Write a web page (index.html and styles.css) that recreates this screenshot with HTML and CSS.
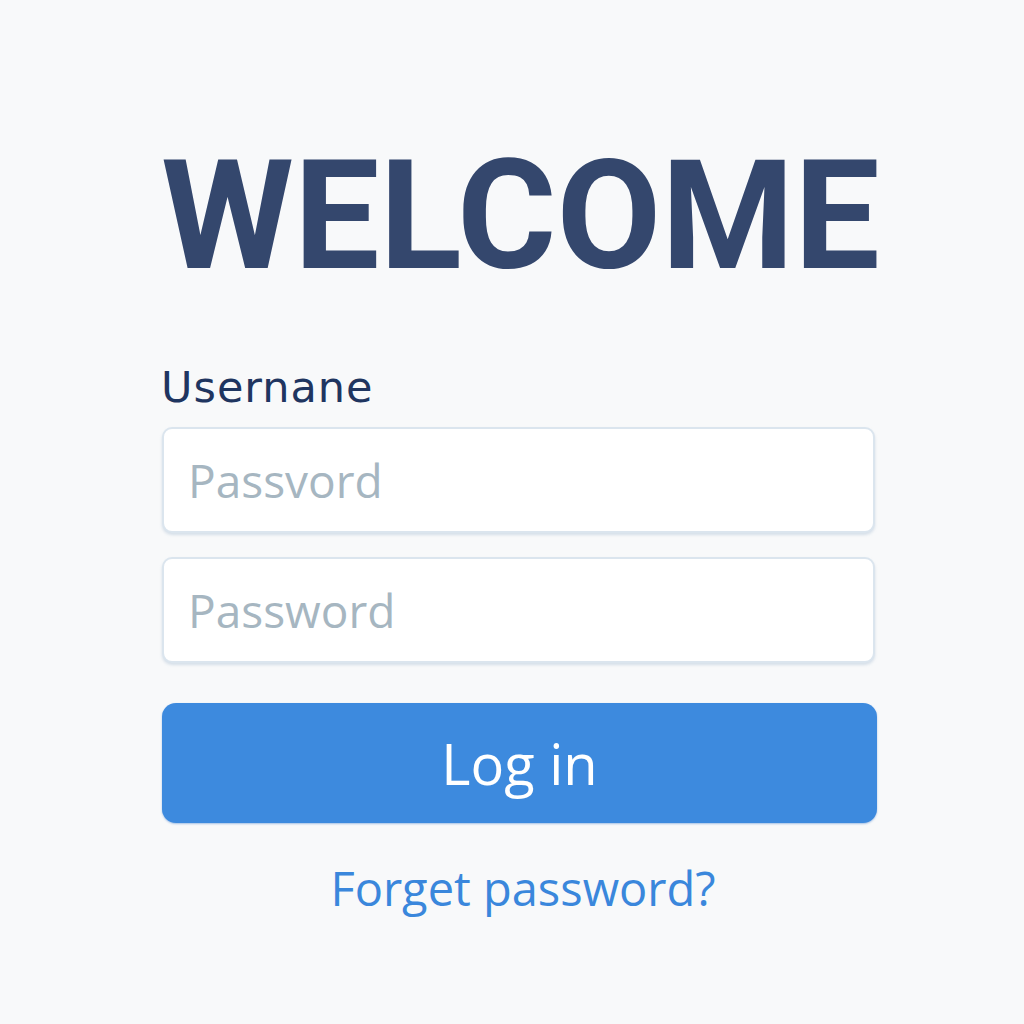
FILE: index.html
```html
<!DOCTYPE html>
<html lang="en">
<head>
<meta charset="utf-8">
<title>Welcome</title>
<link rel="stylesheet" href="styles.css">
</head>
<body>
<main class="page">
  <h1 class="title">WELCOME</h1>
  <form class="form">
    <label class="label" for="user">Usernane</label>
    <input class="field" id="user" type="text" placeholder="Passvord">
    <input class="field second" type="password" placeholder="Password">
    <button class="btn" type="button">Log in</button>
    <a class="forgot" href="#">Forget password?</a>
  </form>
</main>
</body>
</html>
```

FILE: styles.css
```css
html, body {
  margin: 0;
  padding: 0;
  background: #f8f9fa;
}
.page {
  width: 716px;
  margin-left: 161px;
  padding-top: 140px;
  display: flex;
  flex-direction: column;
  font-family: "Open Sans", "Liberation Sans", sans-serif;
}
.title {
  margin: 0;
  font-family: Roboto, "Liberation Sans", sans-serif;
  font-weight: 700;
  font-size: 152px;
  line-height: 153px;
  letter-spacing: 0;
  color: #34476d;
}
.form {
  display: flex;
  flex-direction: column;
  margin-top: 66px;
}
.label {
  font-family: "DejaVu Sans", sans-serif;
  font-size: 43px;
  line-height: 56px;
  letter-spacing: 1px;
  color: #1f3560;
  margin-bottom: 12px;
}
.field {
  box-sizing: border-box;
  width: 713px;
  height: 106px;
  margin-left: 1px;
  border: 2px solid #dbe5ee;
  border-radius: 10px;
  background: #fff;
  box-shadow: 0 2px 3px rgba(150, 175, 200, 0.35);
  padding: 0 24px;
  font-family: "Open Sans", sans-serif;
  font-size: 46px;
  color: #333;
  outline: none;
}
.field::placeholder {
  color: #a6b6c1;
}
.second {
  margin-top: 24px;
}
.btn {
  margin-top: 40px;
  margin-left: 1px;
  width: 715px;
  height: 120px;
  border: none;
  border-radius: 14px;
  background: #3d8ade;
  color: #fff;
  font-family: "Open Sans", sans-serif;
  font-size: 56px;
  box-shadow: 0 1px 2px rgba(40, 110, 200, 0.4);
}
.forgot {
  align-self: center;
  margin-top: 33px;
  margin-left: 8px;
  font-family: "Open Sans", sans-serif;
  font-size: 47px;
  color: #3a87dc;
  text-decoration: none;
}
```
